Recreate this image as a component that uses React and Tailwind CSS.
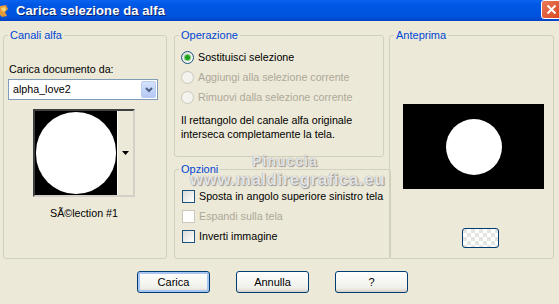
import React from 'react'

const font = { fontFamily: '"Liberation Sans", Arial, sans-serif' }

function GroupBox({ title, className = '', children }) {
  return (
    <fieldset className={`rounded-[3px] border border-[#D0D0BF] ${className}`}>
      <legend className="ml-[4px] px-[2px] text-[11px] leading-[13px] text-[#0046D5]">{title}</legend>
      {children}
    </fieldset>
  )
}

function Radio({ checked, disabled, label }) {
  return (
    <div className="flex h-[16px] items-center gap-[4px] whitespace-nowrap">
      <span
        className={`flex h-[13px] w-[13px] items-center justify-center rounded-full border ${
          disabled ? 'border-[#CAC8BB] bg-[#F4F3EE]' : 'border-[#1C5180] bg-[linear-gradient(135deg,#DCDCD7,#FFFFFF)]'
        }`}
      >
        {checked && <span className="h-[5px] w-[5px] rounded-full bg-[#21A121] shadow-[0_0_0_1px_#7BD07B]" />}
      </span>
      <span className={disabled ? 'text-[#ACA899]' : 'text-black'}>{label}</span>
    </div>
  )
}

function Check({ disabled, label }) {
  return (
    <div className="flex h-[16px] items-center gap-[4px] whitespace-nowrap">
      <span
        className={`h-[13px] w-[13px] shrink-0 border ${
          disabled ? 'border-[#CAC8BB] bg-white' : 'border-[#1C5180] bg-[linear-gradient(135deg,#DCDCD7,#FFFFFF)]'
        }`}
      />
      <span className={disabled ? 'text-[#ACA899]' : 'text-black'}>{label}</span>
    </div>
  )
}

function XpButton({ children, isDefault }) {
  return (
    <button
      className={`h-[22px] w-[73px] rounded-[3px] border border-[#003C74] bg-[linear-gradient(#FFFFFF,#F0F0EA_80%,#D6D0C5)] text-[11px] text-black ${
        isDefault ? 'shadow-[inset_0_0_0_2px_#A9C5F3]' : ''
      }`}
    >
      {children}
    </button>
  )
}

export default function App() {
  return (
    <div className="relative h-[304px] w-[559px] overflow-hidden bg-[#ECE9D8] text-[10.7px] leading-[13px] text-black" style={font}>
      {/* title bar */}
      <div className="flex h-[21px] items-center bg-[linear-gradient(#0A64EE,#0058E6_20%,#0052DD_80%,#0343C4)]">
        <svg width="10" height="16" viewBox="0 0 10 16">
          <path d="M0 3 L6 2 L8 6 L5 9 L7 13 L2 14 L0 12 Z" fill="#E49A3A" />
          <path d="M1 5 L5 4 L6 7 L3 9 Z" fill="#F7D77B" />
        </svg>
        <span className="ml-[6px] text-[13px] font-bold tracking-[0.1px] text-white [text-shadow:1px_1px_0_#0A246A]">
          Carica selezione da alfa
        </span>
        <div className="ml-auto mr-[-3px] flex h-[19px] w-[21px] items-center justify-center self-start rounded-[3px] border border-white bg-[linear-gradient(135deg,#E8795A,#D9461F)]">
          <svg width="11" height="11" viewBox="0 0 11 11">
            <path d="M1.5 1.5 L9.5 9.5 M9.5 1.5 L1.5 9.5" stroke="white" strokeWidth="2" />
          </svg>
        </div>
      </div>

      {/* body */}
      <div className="flex pl-[3px] pt-[8px]">
        <GroupBox title="Canali alfa" className="h-[230px] w-[164px]">
          <div className="px-[4px] pt-[21px]">
            <div className="pl-[1px]">Carica documento da:</div>
            <div className="mt-[3px] flex h-[21px] w-[150px] items-center border border-[#7F9DB9] bg-white">
              <span className="pl-[4px]">alpha_love2</span>
              <span className="ml-auto mr-[1px] flex h-[17px] w-[15px] items-center justify-center rounded-[2px] border border-[#B9CBF3] bg-[linear-gradient(#D6E2FB,#B4C9F6)]">
                <svg width="8" height="6" viewBox="0 0 8 6">
                  <path d="M1 1 L4 4 L7 1" stroke="#4D6185" strokeWidth="2" fill="none" />
                </svg>
              </span>
            </div>
            <div className="ml-[25px] mt-[9px] flex h-[88px] w-[102px] border-2 border-t-[#404040] border-l-[#404040] border-b-[#D4D0C8] border-r-[#D4D0C8] bg-black">
              <div className="flex w-[82px] items-center justify-center overflow-hidden bg-black">
                <div className="h-[82px] w-[80px] shrink-0 rounded-full bg-white" />
              </div>
              <div className="flex flex-1 items-center justify-center border-l border-white bg-[#ECE9D8]">
                <svg width="7" height="4" viewBox="0 0 7 4">
                  <path d="M0 0 L7 0 L3.5 4 Z" fill="black" />
                </svg>
              </div>
            </div>
            <div className="mt-[10px] w-[152px] text-center">SÃ©lection #1</div>
          </div>
        </GroupBox>

        <div className="ml-[7px] flex w-[210px] flex-col gap-[6px]">
          <GroupBox title="Operazione" className="h-[128px]">
            <div className="flex flex-col gap-[4px] px-[6px] pt-[7px]">
              <Radio checked label="Sostituisci selezione" />
              <Radio disabled label="Aggiungi alla selezione corrente" />
              <Radio disabled label="Rimuovi dalla selezione corrente" />
              <p className="mt-[4px] whitespace-nowrap leading-[14px]">
                Il rettangolo del canale alfa originale
                <br />
                interseca completamente la tela.
              </p>
            </div>
          </GroupBox>
          <GroupBox title="Opzioni" className="h-[96px]">
            <div className="flex flex-col gap-[4px] px-[7px] pt-[12px]">
              <Check label="Sposta in angolo superiore sinistro tela" />
              <Check disabled label="Espandi sulla tela" />
              <Check label="Inverti immagine" />
            </div>
          </GroupBox>
        </div>

        <GroupBox title="Anteprima" className="ml-[5px] h-[230px] w-[165px]">
          <div className="pl-[13px] pt-[62px]">
            <div className="flex h-[85px] w-[141px] items-center justify-center bg-black">
              <div className="h-[56px] w-[56px] rounded-full bg-white" />
            </div>
            <div className="ml-[59px] mt-[39px] h-[20px] w-[37px] rounded-[3px] border border-[#003C74] bg-[repeating-conic-gradient(#FFFFFF_0_25%,#E4E4E0_0_50%)] bg-[length:8px_8px]" />
          </div>
        </GroupBox>
      </div>

      {/* buttons */}
      <div className="ml-[137px] mt-[12px] flex gap-[26px]">
        <XpButton isDefault>Carica</XpButton>
        <XpButton>Annulla</XpButton>
        <XpButton>?</XpButton>
      </div>

      {/* watermark */}
      <div className="pointer-events-none absolute left-[190px] top-[153px] w-[190px] text-center font-bold text-white/80 [text-shadow:0_0_1px_#777,1px_1px_1px_#999]">
        <div className="text-[14px] leading-[16px] tracking-[1px]">Pinuccia</div>
        <div className="mt-[2px] text-[17px] leading-[18px] tracking-[0.5px]">www.maldiregrafica.eu</div>
      </div>
    </div>
  )
}
